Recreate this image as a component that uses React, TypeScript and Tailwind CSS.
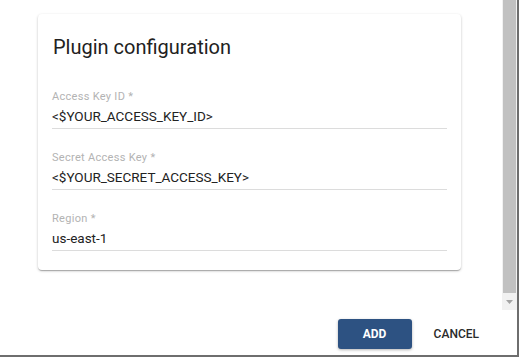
export default function App() {
  const fields = [
    { label: 'Access Key ID', value: '<$YOUR_ACCESS_KEY_ID>' },
    { label: 'Secret Access Key', value: '<$YOUR_SECRET_ACCESS_KEY>' },
    { label: 'Region', value: 'us-east-1' },
  ]

  return (
    <div className="w-[519px] h-[357px] bg-white border-r-2 border-b-2 border-[#6e6e6e] flex flex-col font-['Roboto',sans-serif]">
      <div className="h-[310px] flex">
        <div className="flex-1 pl-[38px] pt-[14px]">
          <div className="w-[423px] h-[256px] rounded-[4px] bg-white px-[14px] pt-[19px] shadow-[0_1px_3px_rgba(0,0,0,0.2),0_1px_1px_rgba(0,0,0,0.14),0_2px_1px_-1px_rgba(0,0,0,0.12)]">
            <h1 className="text-[20px] leading-[28px] text-[#212121] pl-[1px]">Plugin configuration</h1>
            <div className="mt-[26px] flex flex-col gap-[19px]">
              {fields.map((f) => (
                <div key={f.label} className="border-b border-[#dcdcdc]">
                  <div className="pt-[2px] text-[11px] leading-[16px] tracking-[0.3px] text-[#b3b3b3]">{f.label} *</div>
                  <div className="text-[13.5px] leading-[23px] text-[#222]">{f.value}</div>
                </div>
              ))}
            </div>
          </div>
        </div>
        <div className="w-[15px] bg-[#f1f1f1] flex flex-col">
          <div className="h-[293px] bg-[#c1c1c1] mx-[1px]" />
          <div className="flex-1 flex items-center justify-center">
            <svg width="7" height="4" viewBox="0 0 7 4">
              <path d="M0 0h7L3.5 4z" fill="#a3a3a3" />
            </svg>
          </div>
        </div>
      </div>
      <div className="flex-1 flex items-start justify-end pt-[9px] pr-[22px]">
        <button className="w-[74px] h-[30px] rounded-[3px] bg-[#2d5282] text-white text-[12px] font-bold shadow-[0_1px_3px_rgba(0,0,0,0.3)]">
          ADD
        </button>
        <button className="h-[30px] px-[16px] ml-[6px] text-[12px] font-medium text-[#2a2a2a]">
          CANCEL
        </button>
      </div>
    </div>
  )
}
